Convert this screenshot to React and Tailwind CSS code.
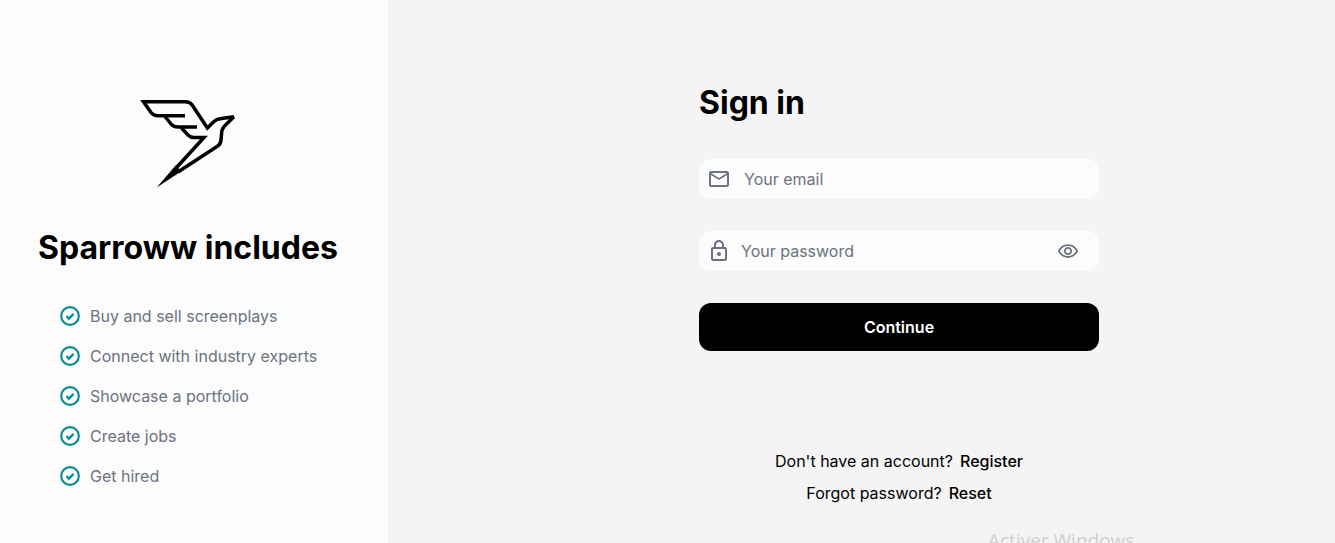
import React from 'react';

const features = [
    'Buy and sell screenplays',
    'Connect with industry experts',
    'Showcase a portfolio',
    'Create jobs',
    'Get hired',
];

const BirdLogo = () => (
    <svg width="96" height="88" viewBox="0 0 96 88" fill="none" stroke="#000" strokeWidth="3.5" strokeLinejoin="miter" className="ml-[102px]">
        <path d="M94 16.8 80 18.8C77.5 19.2 75.5 20.2 74 21.5L67.4 28 52 4.8C50.5 2.6 48.5 1.8 45 1.8H3.5L11 12.5C13 15 15 15.8 18 15.8H45" />
        <path d="M94 16.8 86 24.5C83 27.5 81.8 29 81.7 32L81 40C80.8 43 79.5 45 77 46.5L38 72" />
        <path d="M25 16.5 31 24C33 26.5 35 27 38 27H57" />
        <path d="M41.5 28 48 35C50 37 52 37.5 54 37.5H64L37 67" />
        <path d="M16.7 87.5 36 65 41 71.5Z" fill="#000" stroke="none" />
    </svg>
);

const CheckIcon = () => (
    <svg width="20" height="20" viewBox="0 0 20 20" fill="none" stroke="#0b8a8f" className="shrink-0">
        <circle cx="10" cy="10" r="8.8" strokeWidth="2.2" />
        <path d="M6.4 10.2 8.9 12.6 13.6 7.9" strokeWidth="2.3" />
    </svg>
);

const MailIcon = () => (
    <svg width="24" height="24" viewBox="0 0 24 24" fill="#6b7280" className="shrink-0">
        <path d="M20 4H4c-1.1 0-1.99.9-1.99 2L2 18c0 1.1.9 2 2 2h16c1.1 0 2-.9 2-2V6c0-1.1-.9-2-2-2zm0 14H4V8l8 5 8-5v10zm-8-7L4 6h16l-8 5z" />
    </svg>
);

const LockIcon = () => (
    <svg width="24" height="24" viewBox="0 0 24 24" fill="#6b7280" className="shrink-0">
        <path d="M18 8h-1V6c0-2.76-2.24-5-5-5S7 3.24 7 6v2H6c-1.1 0-2 .9-2 2v10c0 1.1.9 2 2 2h12c1.1 0 2-.9 2-2V10c0-1.1-.9-2-2-2zM9 6c0-1.66 1.34-3 3-3s3 1.34 3 3v2H9V6zm9 14H6V10h12v10zm-6-3c1.1 0 2-.9 2-2s-.9-2-2-2-2 .9-2 2 .9 2 2 2z" />
    </svg>
);

const EyeIcon = () => (
    <svg width="22" height="22" viewBox="0 0 24 24" fill="#6b7280" className="shrink-0">
        <path d="M12 6.5c3.79 0 7.17 2.13 8.82 5.5-1.65 3.37-5.02 5.5-8.82 5.5S4.83 15.37 3.18 12C4.83 8.63 8.21 6.5 12 6.5m0-2C7 4.5 2.73 7.61 1 12c1.73 4.39 6 7.5 11 7.5s9.27-3.11 11-7.5c-1.73-4.39-6-7.5-11-7.5zm0 5c1.38 0 2.5 1.12 2.5 2.5s-1.12 2.5-2.5 2.5-2.5-1.12-2.5-2.5 1.12-2.5 2.5-2.5m0-2c-2.48 0-4.5 2.02-4.5 4.5s2.02 4.5 4.5 4.5 4.5-2.02 4.5-4.5-2.02-4.5-4.5-4.5z" />
    </svg>
);

export default function App() {
    return (
        <div className="relative flex h-screen overflow-hidden bg-[#f4f4f4] font-['Inter',sans-serif]">
            <aside className="flex w-[388px] shrink-0 flex-col items-start bg-[#fcfcfc] pt-[100px] pl-[38px]">
                <BirdLogo />
                <h2 className="mt-[41px] text-[32px] leading-[38px] font-bold text-black">Sparroww includes</h2>
                <ul className="mt-[37px] flex w-full flex-col gap-4 pl-[22px]">
                    {features.map((item) => (
                        <li key={item} className="flex h-6 items-center gap-2.5 text-base text-[#6b7280]">
                            <CheckIcon />
                            {item}
                        </li>
                    ))}
                </ul>
            </aside>

            <main className="flex-1 pt-[83px] pl-[311px]">
                <div className="w-[400px]">
                    <h1 className="text-[32px] leading-10 font-bold text-black">Sign in</h1>

                    <div className="mt-9 flex h-10 items-center rounded-xl bg-[#fcfcfc] pl-2">
                        <MailIcon />
                        <input
                            type="email"
                            placeholder="Your email"
                            className="ml-[13px] w-full bg-transparent text-base text-black outline-none placeholder:text-[#6b7280]"
                        />
                    </div>

                    <div className="mt-8 flex h-10 items-center rounded-xl bg-[#fcfcfc] px-2">
                        <LockIcon />
                        <input
                            type="password"
                            placeholder="Your password"
                            className="ml-[10px] w-full bg-transparent text-base text-black outline-none placeholder:text-[#6b7280]"
                        />
                        <button type="button" className="mr-[12px] ml-2">
                            <EyeIcon />
                        </button>
                    </div>

                    <button type="button" className="mt-8 h-12 w-full rounded-xl bg-black text-base font-semibold text-white">
                        Continue
                    </button>

                    <hr className="mt-[33px] w-[398px] border-t border-[#efefef]" />

                    <div className="mt-[64px] flex flex-col items-center gap-2 text-base text-black">
                        <p className="h-6 leading-6">
                            Don't have an account?<a className="ml-[7px] font-medium">Register</a>
                        </p>
                        <p className="h-6 leading-6">
                            Forgot password?<a className="ml-[7px] font-medium">Reset</a>
                        </p>
                    </div>
                </div>
            </main>

            <span className="absolute top-[527px] left-[988px] font-['Open_Sans',sans-serif] text-[19px] leading-[26px] text-[#cfcfcf]">
                Activer Windows
            </span>
        </div>
    );
}
